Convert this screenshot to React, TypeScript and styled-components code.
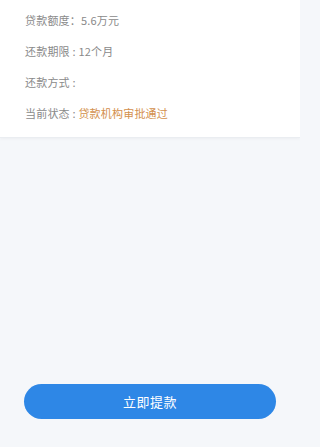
import React from "react";
import styled, { createGlobalStyle } from "styled-components";

const GlobalStyle = createGlobalStyle`
  html, body {
    margin: 0;
    padding: 0;
    background: #f5f7fa;
  }
  body {
    font-family: "Noto Sans CJK SC", "Noto Sans", sans-serif;
  }
`;

const Page = styled.div`
  width: 300px;
  height: 447px;
  display: flex;
  flex-direction: column;
  background: #f5f7fa;
  overflow: hidden;
`;

const InfoPanel = styled.div`
  background: #fff;
  padding: 5px 0 0 25px;
  height: 132px;
  border-bottom: 1px solid #eaedf1;
  box-shadow: 0 1px 3px rgba(0, 0, 0, 0.04);
`;

const Row = styled.div`
  height: 31px;
  line-height: 31px;
  font-size: 11px;
  color: #8a8a8a;
  letter-spacing: 0.2px;
  white-space: pre;
`;

const Value = styled.span<{ highlight?: boolean }>`
  color: ${(p) => (p.highlight ? "#d38f4c" : "#8a8a8a")};
`;

const Spacer = styled.div`
  flex: 1;
`;

const Footer = styled.div`
  padding: 0 24px 28px;
`;

const Button = styled.button`
  display: block;
  width: 100%;
  height: 35px;
  border: none;
  border-radius: 18px;
  background: #2e87e6;
  color: #fff;
  font-family: "Noto Sans CJK SC", sans-serif;
  font-size: 13px;
  letter-spacing: 0.5px;
`;

export default function App() {
  return (
    <>
      <GlobalStyle />
      <Page>
        <InfoPanel>
          <Row>
            {"贷款额度："}
            <Value>5.6万元</Value>
          </Row>
          <Row>
            {"还款期限 : "}
            <Value>12个月</Value>
          </Row>
          <Row>{"还款方式 :"}</Row>
          <Row>
            {"当前状态 : "}
            <Value highlight>贷款机构审批通过</Value>
          </Row>
        </InfoPanel>
        <Spacer />
        <Footer>
          <Button>立即提款</Button>
        </Footer>
      </Page>
    </>
  );
}
